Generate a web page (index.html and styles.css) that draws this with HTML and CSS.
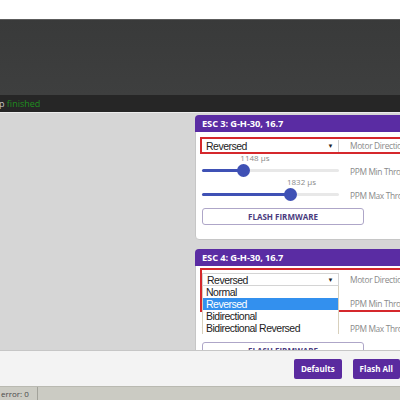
FILE: index.html
```html
<!DOCTYPE html>
<html>
<head>
<meta charset="utf-8">
<link rel="stylesheet" href="styles.css">
</head>
<body>
<div class="top"></div>
<div class="log"></div>
<div class="logline"><span class="pre">p</span> <span class="ok">finished</span></div>
<div class="content">
  <div class="spacer"></div>
  <div class="column">
    <div class="panel">
      <div class="phead">ESC 3: G-H-30, 16.7</div>
      <div class="pbody first">
        <div class="changed">
          <div class="row">
            <div class="ctl"><div class="select">Reversed<span class="arrow">▼</span></div></div>
            <div class="lbl">Motor Direction</div>
          </div>
        </div>
        <div class="row srow">
          <div class="ctl">
            <div class="val"><span class="vtxt" style="left:28%">1148 µs</span></div>
            <div class="track"><div class="fill" style="width:30%"></div><div class="thumb" style="left:30%"></div></div>
          </div>
          <div class="lbl">PPM Min Throttle</div>
        </div>
        <div class="row srow">
          <div class="ctl">
            <div class="val"><span class="vtxt" style="left:62%">1832 µs</span></div>
            <div class="track"><div class="fill" style="width:64%"></div><div class="thumb" style="left:64%"></div></div>
          </div>
          <div class="lbl">PPM Max Throttle</div>
        </div>
        <div class="flash">FLASH FIRMWARE</div>
      </div>
    </div>
    <div class="panel">
      <div class="phead">ESC 4: G-H-30, 16.7</div>
      <div class="pbody second">
        <div class="changed open">
          <div class="row">
            <div class="ctl sel-wrap">
              <div class="select boxed">Reversed<span class="arrow">▼</span></div>
              <ul class="dropdown">
                <li>Normal</li>
                <li class="hl">Reversed</li>
                <li>Bidirectional</li>
                <li>Bidirectional Reversed</li>
              </ul>
            </div>
            <div class="lbl">Motor Direction</div>
          </div>
          <div class="row srow">
            <div class="ctl">
              <div class="val"><span class="vtxt" style="left:28%">1148 µs</span></div>
              <div class="track"><div class="fill" style="width:30%"></div><div class="thumb" style="left:30%"></div></div>
            </div>
            <div class="lbl">PPM Min Throttle</div>
          </div>
        </div>
        <div class="row srow short">
          <div class="ctl">
            <div class="val"><span class="vtxt" style="left:62%">1832 µs</span></div>
            <div class="track"><div class="fill" style="width:64%"></div><div class="thumb" style="left:64%"></div></div>
          </div>
          <div class="lbl">PPM Max Throttle</div>
        </div>
        <div class="flash f2">FLASH FIRMWARE</div>
      </div>
    </div>
  </div>
</div>
<div class="toolbar">
  <div class="btn">Defaults</div>
  <div class="btn">Flash All</div>
</div>
<div class="status"><span class="err">error: 0</span></div>
</body>
</html>
```
FILE: styles.css
```css
html, body {
  margin: 0;
  padding: 0;
}
body {
  width: 400px;
  height: 400px;
  overflow: hidden;
  font-family: "Open Sans", "Liberation Sans", sans-serif;
  background: #ffffff;
}
.top {
  height: 19px;
  background: #ffffff;
}
.log {
  height: 75px;
  border-top: 1px solid #5c5c5c;
  background: linear-gradient(#393a3a, #3e3f3f);
}
.logline {
  height: 17px;
  line-height: 17px;
  background: #262626;
  font-size: 9px;
  white-space: nowrap;
  margin-left: -1px;
}
.logline .pre {
  color: #c8c8c8;
}
.logline .ok {
  color: #1f8f1f;
}
.content {
  height: 237px;
  border-top: 1px solid #ececec;
  background: #d6d6d6;
  display: flex;
  overflow: hidden;
}
.spacer {
  flex: 0 0 195px;
}
.column {
  flex: 0 0 260px;
  padding-top: 2px;
}
.panel {
  width: 258px;
  border: 1px solid #c6c6c6;
  border-radius: 4px;
  background: #ffffff;
  margin-bottom: 9px;
}
.phead {
  height: 17px;
  line-height: 17px;
  margin: -1px -1px 0 -1px;
  padding-left: 7px;
  background: #5a2ca3;
  color: #ffffff;
  font-size: 9.3px;
  font-weight: 700;
  letter-spacing: -0.1px;
  border-radius: 4px 4px 0 0;
  white-space: nowrap;
}
.pbody {
  padding-left: 4px;
  padding-bottom: 14px;
}
.pbody.first {
  padding-top: 5px;
}
.pbody.second {
  padding-top: 2px;
}
.changed {
  border: 2px solid #d5282c;
  border-right: none;
}
.changed.open {
  padding-top: 3px;
}
.row {
  display: flex;
  align-items: flex-end;
}
.srow {
  height: 24px;
  padding-left: 2px;
}
.changed .srow {
  padding-left: 0;
}
.srow.short {
  height: 23px;
}
.ctl {
  width: 137px;
  flex: none;
}
.lbl {
  margin-left: 11px;
  font-size: 8.4px;
  line-height: 13px;
  letter-spacing: -0.35px;
  color: #8a8a8a;
  white-space: nowrap;
}
.select {
  position: relative;
  height: 12px;
  line-height: 12px;
  box-sizing: border-box;
  border-right: 1px solid #d0d0d0;
  padding-left: 4px;
  font-family: "Liberation Sans", Arial, sans-serif;
  font-size: 10.5px;
  letter-spacing: -0.5px;
  color: #222222;
  background: #ffffff;
}
.select.boxed {
  height: 13px;
  line-height: 13px;
  border: 1px solid #d4d4d4;
}
.arrow {
  position: absolute;
  right: 5px;
  top: 0;
  font-size: 6px;
  color: #222222;
}
.sel-wrap {
  position: relative;
}
.dropdown {
  position: absolute;
  top: 100%;
  left: 0;
  width: 137px;
  box-sizing: border-box;
  margin: 0;
  padding: 0;
  list-style: none;
  background: #ffffff;
  border-left: 1px solid #d8d0bc;
  border-right: 1px solid #d8d0bc;
  z-index: 5;
}
.dropdown li {
  height: 12px;
  line-height: 12px;
  padding-left: 3px;
  font-family: "Liberation Sans", Arial, sans-serif;
  font-size: 10.5px;
  letter-spacing: -0.5px;
  color: #222222;
  white-space: nowrap;
}
.dropdown li.hl {
  background: #3390ee;
  color: #ffffff;
}
.val {
  position: relative;
  height: 10px;
}
.vtxt {
  position: absolute;
  top: -1px;
  font-size: 8px;
  line-height: 9px;
  color: #8a8a8a;
  white-space: nowrap;
}
.track {
  position: relative;
  height: 3px;
  margin: 5px 0 6px 0;
  background: #e8e8e8;
  border-radius: 2px;
}
.fill {
  height: 3px;
  background: #3f51b5;
  border-radius: 2px;
}
.thumb {
  position: absolute;
  top: -5px;
  width: 13px;
  height: 13px;
  margin-left: -6px;
  border-radius: 50%;
  background: #3f51b5;
}
.flash {
  width: 162px;
  height: 17px;
  line-height: 15px;
  box-sizing: border-box;
  margin-top: 6px;
  margin-left: 2px;
  border: 1px solid #aea6c8;
  border-radius: 3px;
  text-align: center;
  font-size: 8px;
  font-weight: 700;
  color: #4a3b7e;
}
.flash.f2 {
  margin-top: 7px;
}
.toolbar {
  height: 35px;
  border-top: 1px solid #c6c6c6;
  background: #f3f3f3;
  display: flex;
  justify-content: flex-end;
  align-items: center;
  gap: 11px;
}
.btn {
  height: 20px;
  line-height: 20px;
  padding: 0 7px;
  background: #5a2a9f;
  color: #ffffff;
  font-size: 8px;
  font-weight: 700;
  border-radius: 2px;
}
.status {
  height: 13px;
  border-top: 1px solid #b9b9b1;
  background: #cbcbc3;
  font-size: 8px;
  line-height: 13px;
  color: #4a4a4a;
}
.err {
  display: inline-block;
  width: 36px;
  padding-left: 1px;
  border-right: 1px solid #a2a29a;
}
```
